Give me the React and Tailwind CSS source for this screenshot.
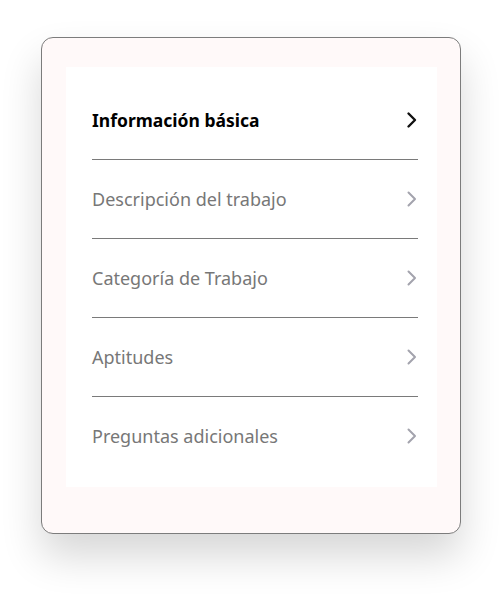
import React from 'react';

const steps = [
  { label: 'Información básica', active: true },
  { label: 'Descripción del trabajo' },
  { label: 'Categoría de Trabajo' },
  { label: 'Aptitudes' },
  { label: 'Preguntas adicionales' },
];

const Chevron = ({ active }) => (
  <svg width="12" height="18" viewBox="0 0 12 18" fill="none">
    <path
      d="M2.5 2.5 L9 9 L2.5 15.5"
      stroke={active ? '#111111' : '#a3a3ad'}
      strokeWidth={active ? 2.4 : 2}
      strokeLinecap="round"
      strokeLinejoin="round"
    />
  </svg>
);

const App = () => {
  return (
    <div className="w-[500px] h-[595px] bg-white pt-[37px] pl-[41px] font-['Noto_Sans',sans-serif]">
      <div className="w-[420px] h-[497px] rounded-[12px] border border-[#7c7c7c] bg-[#fff9f9] pt-[29px] pl-[24px] shadow-[0_22px_40px_rgba(0,0,0,0.16)]">
        <div className="w-[371px] h-[420px] bg-white pt-[14px] pl-[26px] pr-[19px]">
          {steps.map((step, i) => (
            <div key={step.label}>
              {i > 0 && <div className="h-px bg-[#7a7a7a]" />}
              <div className="h-[78px] flex items-center justify-between">
                <span
                  className={
                    step.active
                      ? 'text-[17.5px] font-bold text-black'
                      : 'text-[18px] text-[#777777]'
                  }
                >
                  {step.label}
                </span>
                <Chevron active={step.active} />
              </div>
            </div>
          ))}
        </div>
      </div>
    </div>
  );
};

export default App;
